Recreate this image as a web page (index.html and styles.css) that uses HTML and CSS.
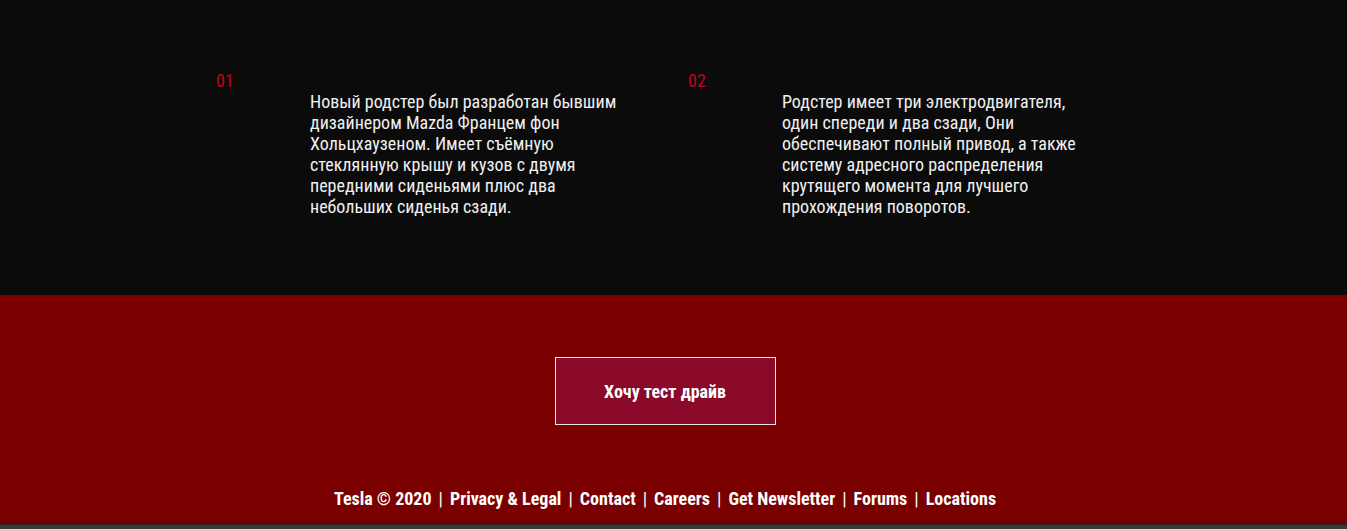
FILE: index.html
```html
<!DOCTYPE html>
<html lang="ru">
<head>
<meta charset="utf-8">
<title>Tesla Roadster</title>
<link rel="stylesheet" href="styles.css">
</head>
<body>
<section class="facts">
  <div class="facts-inner">
    <div class="fact">
      <span class="fact-num">01</span>
      <p class="fact-text">Новый родстер был разработан бывшим дизайнером Mazda Францем фон Хольцхаузеном. Имеет съёмную стеклянную крышу и кузов с двумя передними сиденьями плюс два небольших сиденья сзади.</p>
    </div>
    <div class="fact">
      <span class="fact-num">02</span>
      <p class="fact-text">Родстер имеет три электродвигателя, один спереди и два сзади, Они обеспечивают полный привод, а также систему адресного распределения крутящего момента для лучшего прохождения поворотов.</p>
    </div>
  </div>
</section>
<section class="cta">
  <button class="cta-btn" type="button">Хочу тест драйв</button>
  <nav class="footer-nav">
    <span>Tesla © 2020</span><span class="sep">|</span><a href="#">Privacy &amp; Legal</a><span class="sep">|</span><a href="#">Contact</a><span class="sep">|</span><a href="#">Careers</a><span class="sep">|</span><a href="#">Get Newsletter</a><span class="sep">|</span><a href="#">Forums</a><span class="sep">|</span><a href="#">Locations</a>
  </nav>
</section>
<div class="bottom-strip"></div>
</body>
</html>
```
FILE: styles.css
```css
* { box-sizing: border-box; }
html, body { margin: 0; padding: 0; }
body {
  font-family: "Roboto Condensed", Roboto, "Liberation Sans", sans-serif;
  font-stretch: condensed;
  background: #0b0b0b;
  color: #f0f0f0;
}
.facts {
  background: #0b0b0b;
  height: 295px;
  padding-top: 70px;
}
.facts-inner {
  width: 915px;
  margin: 0 auto;
  display: grid;
  grid-template-columns: 472px 1fr;
}
.fact {
  display: grid;
  grid-template-columns: 94px 1fr;
}
.fact-num {
  color: #c0001f;
  font-size: 18px;
  line-height: 21px;
}
.fact-text {
  margin: 21px 0 0;
  font-size: 18px;
  line-height: 21px;
  max-width: 315px;
}
.cta {
  background: #7a0000;
  height: 229px;
  padding: 62px 17px 0 0;
  display: flex;
  flex-direction: column;
  align-items: center;
}
.cta-btn {
  width: 221px;
  height: 68px;
  background: #8a0828;
  border: 1px solid #e6e6e6;
  color: #fff;
  font-family: inherit;
  font-stretch: condensed;
  font-size: 18px;
  font-weight: 700;
  cursor: pointer;
}
.footer-nav {
  margin-top: 63px;
  color: #fff;
  font-size: 18px;
  font-weight: 700;
  display: flex;
  align-items: center;
}
.footer-nav a { color: #fff; text-decoration: none; }
.sep { margin: 0 7px; font-weight: 400; }
.bottom-strip {
  height: 5px;
  background: #3a3a3a;
  border-top: 1px solid #222;
}
```
